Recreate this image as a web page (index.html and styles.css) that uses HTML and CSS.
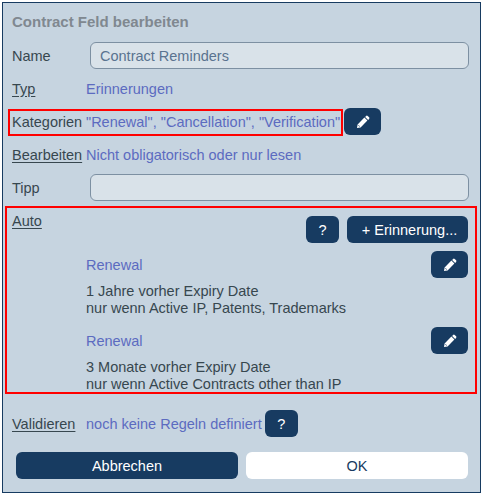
FILE: index.html
```html
<!DOCTYPE html>
<html lang="de">
<head>
  <meta charset="UTF-8" />
  <meta name="viewport" content="width=device-width, initial-scale=1.0" />
  <title>Contract Feld bearbeiten</title>
  <link rel="stylesheet" href="styles.css">
</head>
<body>
  <svg class="icon-defs" width="0" height="0" aria-hidden="true">
    <symbol id="pencil" viewBox="0 0 14 14">
      <path d="M1 13 L1.6 9.4 L8.4 2.6 L11.4 5.6 L4.6 12.4 Z M2.2 10.4 L3.6 11.8 L4 11.4 L2.6 10 Z" fill-rule="evenodd" />
      <path d="M9.1 1.9 L10.1 0.9 Q10.9 0.2 11.7 0.9 L13.1 2.3 Q13.8 3.1 13.1 3.9 L12.1 4.9 Z" />
    </symbol>
  </svg>

  <div class="dialog">
    <h1 class="title">Contract Feld bearbeiten</h1>

    <div class="row">
      <span class="label">Name</span>
      <input class="field" type="text" value="Contract Reminders" />
    </div>

    <div class="row">
      <span class="label"><span class="link">Typ</span></span>
      <span class="value">Erinnerungen</span>
    </div>

    <div class="row">
      <div class="marked-row">
        <span class="label">Kategorien</span>
        <span class="value">"Renewal", "Cancellation", "Verification"</span>
      </div>
      <button class="btn btn-icon" type="button" aria-label="Bearbeiten"><svg class="pencil"><use href="#pencil" /></svg></button>
    </div>

    <div class="row">
      <span class="label"><span class="link">Bearbeiten</span></span>
      <span class="value">Nicht obligatorisch oder nur lesen</span>
    </div>

    <div class="row">
      <span class="label">Tipp</span>
      <input class="field" type="text" />
    </div>

    <!-- Auto section with its reminders -->
    <div class="auto">
      <span class="label auto-label"><span class="link">Auto</span></span>
      <div class="auto-body">
        <div class="auto-actions">
          <button class="btn btn-help" type="button">?</button>
          <button class="btn btn-add" type="button">+ Erinnerung...</button>
        </div>

        <div class="reminder">
          <div class="reminder-head">
            <span class="value">Renewal</span>
            <button class="btn btn-icon" type="button" aria-label="Bearbeiten"><svg class="pencil"><use href="#pencil" /></svg></button>
          </div>
          <p class="reminder-text">1 Jahre vorher Expiry Date<br>nur wenn Active IP, Patents, Trademarks</p>
        </div>

        <div class="reminder">
          <div class="reminder-head">
            <span class="value">Renewal</span>
            <button class="btn btn-icon" type="button" aria-label="Bearbeiten"><svg class="pencil"><use href="#pencil" /></svg></button>
          </div>
          <p class="reminder-text">3 Monate vorher Expiry Date<br>nur wenn Active Contracts other than IP</p>
        </div>
      </div>
    </div>

    <div class="row row-validate">
      <span class="label"><span class="link">Validieren</span></span>
      <span class="value">noch keine Regeln definiert</span>
      <button class="btn btn-help" type="button">?</button>
    </div>

    <div class="footer">
      <button class="btn btn-wide" type="button">Abbrechen</button>
      <button class="btn btn-wide btn-ok" type="button">OK</button>
    </div>
  </div>
</body>
</html>
```

FILE: styles.css
```css
* {
  box-sizing: border-box;
}

body {
  font-family: "Liberation Sans", Arial, sans-serif;
  font-size: 14.5px;
  margin: 0;
  background: #ffffff;
  color: #37474f;
}

.icon-defs {
  position: absolute;
}

.dialog {
  width: 479px;
  height: 491px;
  margin: 2px;
  padding: 11px 11px 0 9px;
  background-color: #c6d4e0;
  border: 1px solid #173b61;
}

.title {
  margin: 0 0 12px;
  font-size: 15px;
  line-height: 16px;
  font-weight: bold;
  color: #808890;
}

.row {
  display: flex;
  align-items: center;
  height: 27px;
  margin-bottom: 6px;
}

.label {
  flex: none;
  width: 74px;
}

.link {
  text-decoration: underline;
  text-underline-offset: 2px;
}

.value {
  color: #5c6bc0;
  white-space: nowrap;
}

.field {
  flex: 1;
  min-width: 0;
  height: 27px;
  margin-left: 4px;
  padding: 0 9px;
  font-family: inherit;
  font-size: 14.5px;
  color: #5a7390;
  background-color: #d9e2e9;
  border: 1px solid #7d90a2;
  border-radius: 6px;
}

.marked-row {
  display: flex;
  align-items: center;
  height: 27px;
  margin: 2px 0 0 -4px;
  padding: 0 1px 2px 2px;
  border: 2px solid #ff0000;
}

.btn {
  height: 27px;
  padding: 0;
  font-family: inherit;
  font-size: 14.5px;
  color: #ffffff;
  background-color: #173b61;
  border: none;
  border-radius: 6px;
}

.btn-icon {
  display: flex;
  align-items: center;
  justify-content: center;
  flex: none;
  width: 37px;
  margin-left: 1px;
}

.pencil {
  width: 14px;
  height: 14px;
  fill: #ffffff;
}

.btn-help {
  width: 33px;
}

.btn-add {
  width: 121px;
  padding-left: 4px;
}

.auto {
  display: flex;
  height: 188px;
  margin: -1px -8px 16px -7px;
  padding: 5px 7px 0 5px;
  border: 2px solid #ff0000;
}

.auto-label {
  height: 17px;
  line-height: 17px;
}

.auto-body {
  flex: 1;
}

.auto-actions {
  display: flex;
  justify-content: flex-end;
  gap: 8px;
  margin: 3px 0 8px;
}

.reminder {
  margin-bottom: 10px;
}

.reminder-head {
  display: flex;
  align-items: center;
  justify-content: space-between;
}

.reminder-text {
  margin: 5px 0 0;
  line-height: 17px;
}

.row-validate {
  margin-bottom: 15px;
}

.row-validate .btn-help {
  margin-left: 3px;
}

.footer {
  display: flex;
  gap: 8px;
  margin-right: 1px;
  padding-left: 4px;
}

.btn-wide {
  flex: 1;
}

.btn-ok {
  color: #173b61;
  background-color: #ffffff;
}
```
